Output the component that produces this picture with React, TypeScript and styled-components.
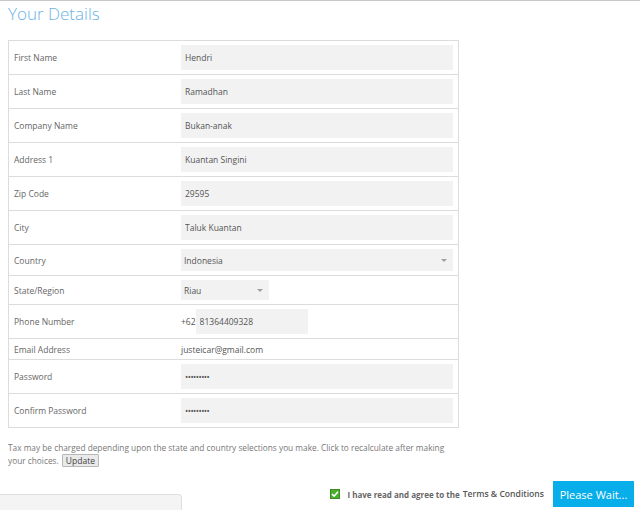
import React from "react";
import styled, { createGlobalStyle } from "styled-components";

const GlobalStyle = createGlobalStyle`
  html, body { margin: 0; padding: 0; background: #fff; }
  body { font-family: "Open Sans", "Liberation Sans", sans-serif; color: #666; }
  * { box-sizing: border-box; }
`;

const Page = styled.div`
  width: 640px;
  height: 510px;
  overflow: hidden;
  border-top: 1px solid #c8c8c8;
  display: flex;
  flex-direction: column;
`;

const Content = styled.div`
  padding: 0 8px;
`;

const Title = styled.h1`
  margin: 0 0 15px;
  padding-top: 2px;
  font-size: 17px;
  line-height: 22px;
  font-weight: 300;
  color: #6cb3e6;
`;

const Form = styled.div`
  width: 451px;
  border: 1px solid #dcdcdc;
`;

const Row = styled.div`
  display: grid;
  grid-template-columns: 168px 1fr;
  align-items: center;
  & + & { border-top: 1px solid #dcdcdc; }
`;

const Label = styled.div`
  padding: 4px 5px;
  font-size: 8.5px;
  color: #666;
`;

const Value = styled.div`
  padding: 4px 4px;
  display: flex;
  align-items: center;
  font-size: 8.5px;
  color: #555;
  min-height: 20px;
`;

const Input = styled.input<{ $w?: number; $secret?: boolean }>`
  width: ${(p) => (p.$w ? `${p.$w}px` : "272px")};
  height: 25px;
  border: none;
  background: #f2f2f2;
  padding: 0 4px;
  font-family: "Open Sans", "Liberation Sans", sans-serif;
  font-size: 8.5px;
  letter-spacing: ${(p) => (p.$secret ? "-0.5px" : "0")};
  color: #555;
  outline: none;
`;

const SelectBox = styled.div<{ $w: number; $h: number }>`
  position: relative;
  width: ${(p) => p.$w}px;
  height: ${(p) => p.$h}px;
  background: #f2f2f2;
`;

const Select = styled.select`
  appearance: none;
  -webkit-appearance: none;
  width: 100%;
  height: 100%;
  border: none;
  background: transparent;
  padding: 0 3px;
  font-family: "Open Sans", "Liberation Sans", sans-serif;
  font-size: 8.5px;
  color: #555;
  outline: none;
`;

const Arrow = styled.span<{ $right: number }>`
  position: absolute;
  right: ${(p) => p.$right}px;
  top: 50%;
  margin-top: -1px;
  width: 0;
  height: 0;
  border-left: 3px solid transparent;
  border-right: 3px solid transparent;
  border-top: 3px solid #a0a0a0;
  pointer-events: none;
`;

const Prefix = styled.span`
  margin-right: 0;
`;

const Note = styled.p`
  margin: 13px 0 0;
  width: 450px;
  font-size: 8.3px;
  line-height: 13px;
  color: #777;
`;

const SmallButton = styled.button`
  font-family: "Open Sans", "Liberation Sans", sans-serif;
  font-size: 8.5px;
  color: #444;
  background: #eaeaea;
  border: 1px solid #b8b8b8;
  border-radius: 1px;
  padding: 0 3px;
  height: 13px;
  line-height: 11px;
  margin-left: 1px;
  vertical-align: bottom;
`;

const Footer = styled.div`
  margin-top: auto;
  display: flex;
  justify-content: space-between;
  align-items: flex-end;
  padding-right: 6px;
`;

const Panel = styled.div`
  width: 182px;
  height: 16px;
  background: #f4f4f4;
  border: 1px solid #dedede;
  border-left: none;
  border-bottom: none;
  border-top-right-radius: 4px;
`;

const Agree = styled.div`
  display: flex;
  align-items: center;
  margin-bottom: 3px;
`;

const Check = styled.span`
  width: 10px;
  height: 10px;
  background: #4cae2f;
  border: 1px solid #3b8f22;
  display: inline-flex;
  align-items: center;
  justify-content: center;
  margin-right: 7px;
`;

const AgreeText = styled.span`
  font-size: 8px;
  font-weight: 700;
  color: #666;
  margin-right: 3px;
`;

const Terms = styled.span`
  font-size: 8.6px;
  font-weight: 600;
  color: #555;
`;

const Primary = styled.button`
  width: 81px;
  height: 26px;
  background: #07aeea;
  border: none;
  color: #fff;
  font-family: "Open Sans", "Liberation Sans", sans-serif;
  font-size: 11px;
  margin-left: 9px;
  padding: 0;
`;

type F = { label: string; value: string };
const top: F[] = [
  { label: "First Name", value: "Hendri" },
  { label: "Last Name", value: "Ramadhan" },
  { label: "Company Name", value: "Bukan-anak" },
  { label: "Address 1", value: "Kuantan Singini" },
  { label: "Zip Code", value: "29595" },
  { label: "City", value: "Taluk Kuantan" },
];

export default function App() {
  return (
    <>
      <GlobalStyle />
      <Page>
        <Content>
          <Title>Your Details</Title>
          <Form>
            {top.map((f) => (
              <Row key={f.label}>
                <Label>{f.label}</Label>
                <Value>
                  <Input readOnly defaultValue={f.value} />
                </Value>
              </Row>
            ))}
            <Row>
              <Label>Country</Label>
              <Value>
                <SelectBox $w={272} $h={22}>
                  <Select defaultValue="Indonesia">
                    <option>Indonesia</option>
                  </Select>
                  <Arrow $right={6} />
                </SelectBox>
              </Value>
            </Row>
            <Row>
              <Label>State/Region</Label>
              <Value>
                <SelectBox $w={88} $h={20}>
                  <Select defaultValue="Riau">
                    <option>Riau</option>
                  </Select>
                  <Arrow $right={6} />
                </SelectBox>
              </Value>
            </Row>
            <Row>
              <Label>Phone Number</Label>
              <Value>
                <Prefix>+62</Prefix>
                <Input readOnly $w={112} defaultValue="81364409328" />
              </Value>
            </Row>
            <Row>
              <Label>Email Address</Label>
              <Value>justeicar@gmail.com</Value>
            </Row>
            <Row>
              <Label>Password</Label>
              <Value>
                <Input readOnly $secret type="password" defaultValue="123456789" />
              </Value>
            </Row>
            <Row>
              <Label>Confirm Password</Label>
              <Value>
                <Input readOnly $secret type="password" defaultValue="123456789" />
              </Value>
            </Row>
          </Form>
          <Note>
            Tax may be charged depending upon the state and country selections you make. Click to recalculate after making
            your choices. <SmallButton>Update</SmallButton>
          </Note>
        </Content>
        <Footer>
          <Panel />
          <Agree>
            <Check>
              <svg width="8" height="8" viewBox="0 0 8 8">
                <path d="M1 4.2 L3.1 6.2 L7 1.8" stroke="#fff" strokeWidth="1.6" fill="none" />
              </svg>
            </Check>
            <AgreeText>I have read and agree to the</AgreeText>
            <Terms>Terms &amp; Conditions</Terms>
            <Primary>Please Wait...</Primary>
          </Agree>
        </Footer>
      </Page>
    </>
  );
}
